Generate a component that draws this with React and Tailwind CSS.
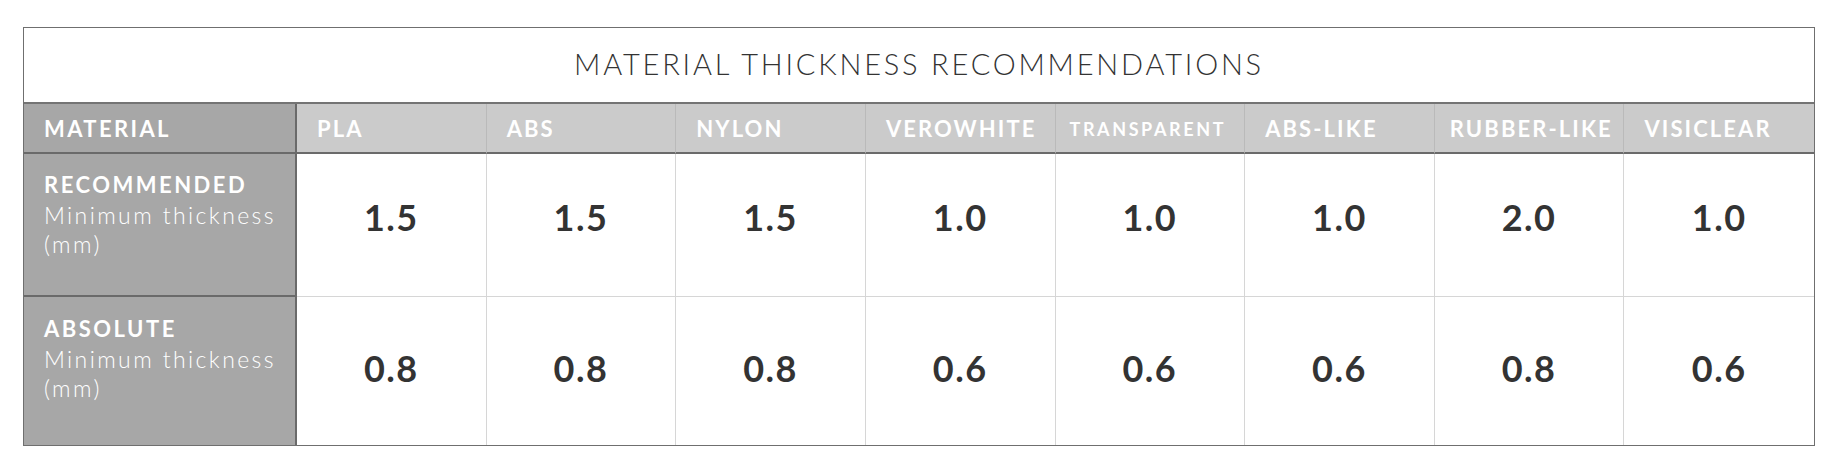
import React from "react";

const MATERIALS = ["PLA", "ABS", "NYLON", "VEROWHITE", "TRANSPARENT", "ABS-LIKE", "RUBBER-LIKE", "VISICLEAR"];

const ROWS = [
  { label: "RECOMMENDED", values: ["1.5", "1.5", "1.5", "1.0", "1.0", "1.0", "2.0", "1.0"], h: "h-[143px]", pt: "pt-[15px]", numPad: "pb-4" },
  { label: "ABSOLUTE", values: ["0.8", "0.8", "0.8", "0.6", "0.6", "0.6", "0.8", "0.6"], h: "h-[148px]", pt: "pt-[16px]", numPad: "pb-[6px]" },
];

const headPad = (m) => (m === "TRANSPARENT" ? "pl-[14px]" : m === "RUBBER-LIKE" ? "pl-[15px]" : "pl-[20px]");

export default function App() {
  return (
    <div className="min-h-screen bg-white pt-[27px] pl-[23px]" style={{ fontFamily: "Lato, 'Open Sans', sans-serif" }}>
      <div className="w-[1792px] border-[1.5px] border-[#6f6f6f]">
        <div className="h-[76px] flex items-center justify-center border-b-2 border-[#747474]">
          <h1 className="text-[29px] font-light tracking-[2.8px] text-[#333] leading-none pb-[3px]">
            MATERIAL THICKNESS RECOMMENDATIONS
          </h1>
        </div>

        <div className="grid grid-cols-[273px_repeat(8,minmax(0,1fr))]">
          {/* header row */}
          <div className="h-[50px] bg-[#a7a7a7] border-r-2 border-b-2 border-[#6a6a6a] flex items-center pl-[20px] pt-[2px]">
            <span className="text-white text-[22px] font-bold tracking-[2.4px] leading-none">MATERIAL</span>
          </div>
          {MATERIALS.map((m, i) => (
            <div
              key={m}
              className={`h-[50px] bg-[#cbcbcb] border-b-2 border-[#6a6a6a] flex items-center pt-[2px] ${headPad(m)} ${i < MATERIALS.length - 1 ? "border-r border-r-[#bababa]" : ""}`}
            >
              <span className={`text-white font-bold leading-none whitespace-nowrap ${m === "TRANSPARENT" ? "text-[18px] tracking-[2.6px]" : "text-[22px] tracking-[2.1px]"}`}>{m}</span>
            </div>
          ))}

          {/* data rows */}
          {ROWS.map((row, r) => (
            <React.Fragment key={row.label}>
              <div className={`${row.h} bg-[#a7a7a7] border-r-2 border-[#6a6a6a] ${r === 0 ? "border-b-2" : ""} pl-[20px] ${row.pt}`}>
                <div className="text-white text-[22px] font-bold tracking-[2.5px] leading-[32px]">{row.label}</div>
                <div className="text-white text-[23px] font-light tracking-[2.4px] leading-[29px]">
                  Minimum thickness
                  <br />
                  (mm)
                </div>
              </div>
              {row.values.map((v, i) => (
                <div
                  key={i}
                  className={`${row.h} flex items-center justify-center ${row.numPad} ${i < 7 ? "border-r border-[#d6d6d6]" : ""} ${r === 0 ? "border-b border-b-[#d6d6d6]" : ""}`}
                >
                  <span className="text-[36px] font-bold text-[#333] tracking-[1.5px] leading-none">{v}</span>
                </div>
              ))}
            </React.Fragment>
          ))}
        </div>
      </div>
    </div>
  );
}
